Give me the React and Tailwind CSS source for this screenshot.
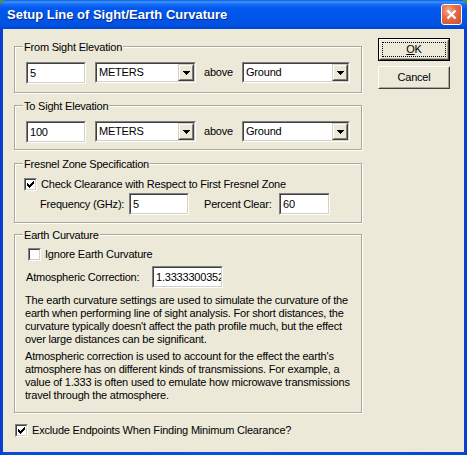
import React from 'react';

// XP-style dialog: Setup Line of Sight/Earth Curvature

const Sunken = ({ className = '', children }) => (
  <div className={`shrink-0 border border-t-[#808080] border-l-[#808080] border-b-white border-r-white ${className}`}>
    <div className="h-full w-full border border-t-[#404040] border-l-[#404040] border-b-[#d4d0c8] border-r-[#d4d0c8] bg-white overflow-hidden">
      {children}
    </div>
  </div>
);

const Edit = ({ value, className }) => (
  <Sunken className={className}>
    <div className="pl-[2px] pt-[3px] whitespace-nowrap leading-[13px]">{value}</div>
  </Sunken>
);

const Combo = ({ value, className }) => (
  <Sunken className={className}>
    <div className="flex h-full">
      <div className="flex-1 pl-[2px] pt-[2px] leading-[13px] whitespace-nowrap">{value}</div>
      <div className="w-[16px] h-full border border-t-[#d4d0c8] border-l-[#d4d0c8] border-b-[#404040] border-r-[#404040]">
        <div className="h-full w-full border border-t-white border-l-white border-b-[#808080] border-r-[#808080] bg-[#ece9d8] flex items-center justify-center">
          <svg width="7" height="4" viewBox="0 0 7 4" shapeRendering="crispEdges">
            <path d="M0 0h7v1H0zM1 1h5v1H1zM2 2h3v1H2zM3 3h1v1H3z" fill="#000" />
          </svg>
        </div>
      </div>
    </div>
  </Sunken>
);

const Check = ({ checked }) => (
  <Sunken className="w-[13px] h-[13px]">
    <div className="flex h-full items-center justify-center">
      {checked && (
        <svg width="7" height="7" viewBox="0 0 7 7" shapeRendering="crispEdges">
          <path d="M6 0h1v1H6zM5 1h2v1H5zM0 2h1v1H0zM4 2h3v1H4zM0 3h2v1H0zM3 3h3v1H3zM0 4h5v1H0zM1 5h3v1H1zM2 6h1v1H2z" fill="#000" />
        </svg>
      )}
    </div>
  </Sunken>
);

const Group = ({ title, className, children }) => (
  <div className={`relative border border-[#aca899] shadow-[inset_1px_1px_0_#fff,1px_1px_0_#fff] ${className}`}>
    <span className="absolute left-[8px] -top-[6px] bg-[#ece9d8] px-[1px] leading-[13px] whitespace-nowrap">{title}</span>
    {children}
  </div>
);

const Button = ({ children, isDefault }) => (
  <div className={`w-[72px] h-[23px] ${isDefault ? 'border border-black' : ''}`}>
    <div className="h-full w-full border border-t-white border-l-white border-b-[#404040] border-r-[#404040]">
      <div className="h-full w-full border border-t-[#ece9d8] border-l-[#ece9d8] border-b-[#aca899] border-r-[#aca899] bg-[#ece9d8] p-[1px]">
        <div className={`h-full w-full flex items-center justify-center leading-[13px] ${isDefault ? 'border border-dotted border-black' : ''}`}>
          {children}
        </div>
      </div>
    </div>
  </div>
);

export default function App() {
  return (
    <div className="w-[467px] h-[455px] bg-[#4a9a3c] font-['Liberation_Sans',Arial,sans-serif]">
      <div className="w-full h-full rounded-t-[7px] overflow-hidden bg-[linear-gradient(90deg,#0a3cc8_0%,#0a48dc_1%,#0a4ee0_50%,#0846d8_99%,#0a3cc8_100%)] flex flex-col">
        {/* title bar */}
        <div className="h-[29px] shrink-0 flex items-center pl-[7px] pr-[5px] bg-[linear-gradient(180deg,#0a5fd8_0%,#3d95ff_7%,#1a6cf5_14%,#0058ee_30%,#0055e8_60%,#0052e3_85%,#0046d2_100%)]">
          <span className="flex-1 text-white font-bold text-[13px] leading-[16px] pt-[1px] [text-shadow:1px_1px_0_#0a2a8a] whitespace-nowrap">
            Setup Line of Sight/Earth Curvature
          </span>
          <div className="w-[21px] h-[21px] rounded-[3px] border border-white bg-[radial-gradient(circle_at_35%_30%,#f4ad92_0%,#e46c4a_40%,#d04a26_100%)] flex items-center justify-center">
            <svg width="11" height="11" viewBox="0 0 11 11">
              <path d="M1.5 1.5l8 8M9.5 1.5l-8 8" stroke="#fff" strokeWidth="2.4" />
            </svg>
          </div>
        </div>

        {/* client */}
        <div className="mx-[3px] mb-[3px] flex-1 bg-[#ece9d8] flex text-[11px] leading-[13px] tracking-[-0.2px] text-black">
          <div className="ml-[11px] w-[348px] flex flex-col">
            <Group title="From Sight Elevation" className="mt-[17px] h-[47px]">
              <div className="pt-[15px] pl-[11px] flex items-start">
                <Edit value="5" className="w-[60px] h-[22px]" />
                <Combo value="METERS" className="ml-[9px] w-[101px] h-[21px]" />
                <span className="ml-[8px] w-[38px] pt-[4px]">above</span>
                <Combo value="Ground" className="w-[108px] h-[21px]" />
              </div>
            </Group>

            <Group title="To Sight Elevation" className="mt-[12px] h-[45px]">
              <div className="pt-[15px] pl-[11px] flex items-start">
                <Edit value="100" className="w-[60px] h-[22px]" />
                <Combo value="METERS" className="ml-[9px] w-[101px] h-[21px]" />
                <span className="ml-[8px] w-[38px] pt-[4px]">above</span>
                <Combo value="Ground" className="w-[108px] h-[21px]" />
              </div>
            </Group>

            <Group title="Fresnel Zone Specification" className="mt-[13px] h-[60px]">
              <div className="pt-[14px] pl-[9px] flex items-center">
                <Check checked />
                <span className="ml-[4px]">Check Clearance with Respect to First Fresnel Zone</span>
              </div>
              <div className="mt-[2px] pl-[25px] flex items-center">
                <span className="w-[89px]">Frequency (GHz):</span>
                <Edit value="5" className="w-[60px] h-[22px]" />
                <span className="ml-[15px] w-[75px]">Percent Clear:</span>
                <Edit value="60" className="w-[51px] h-[22px]" />
              </div>
            </Group>

            <Group title="Earth Curvature" className="mt-[11px] h-[179px]">
              <div className="pt-[13px] pl-[13px] flex items-center">
                <Check />
                <span className="ml-[4px]">Ignore Earth Curvature</span>
              </div>
              <div className="mt-[5px] pl-[11px] flex items-center">
                <span className="w-[126px]">Atmospheric Correction:</span>
                <Edit value="1.3333300352" className="w-[71px] h-[22px]" />
              </div>
              <div className="mt-[6px] pl-[10px] whitespace-nowrap">
                <p>The earth curvature settings are used to simulate the curvature of the</p>
                <p>earth when performing line of sight analysis. For short distances, the</p>
                <p>curvature typically doesn't affect the path profile much, but the effect</p>
                <p>over large distances can be significant.</p>
              </div>
              <div className="mt-[4px] pl-[10px] whitespace-nowrap">
                <p>Atmospheric correction is used to account for the effect the earth's</p>
                <p>atmosphere has on different kinds of transmissions. For example, a</p>
                <p>value of 1.333 is often used to emulate how microwave transmissions</p>
                <p>travel through the atmosphere.</p>
              </div>
            </Group>

            <div className="mt-[11px] ml-[1px] flex items-center">
              <Check checked />
              <span className="ml-[4px]">Exclude Endpoints When Finding Minimum Clearance?</span>
            </div>
          </div>

          <div className="ml-[16px] pt-[9px] flex flex-col">
            <Button isDefault>
              <span><span className="underline">O</span>K</span>
            </Button>
            <div className="mt-[5px]">
              <Button>Cancel</Button>
            </div>
          </div>
        </div>
      </div>
    </div>
  );
}
